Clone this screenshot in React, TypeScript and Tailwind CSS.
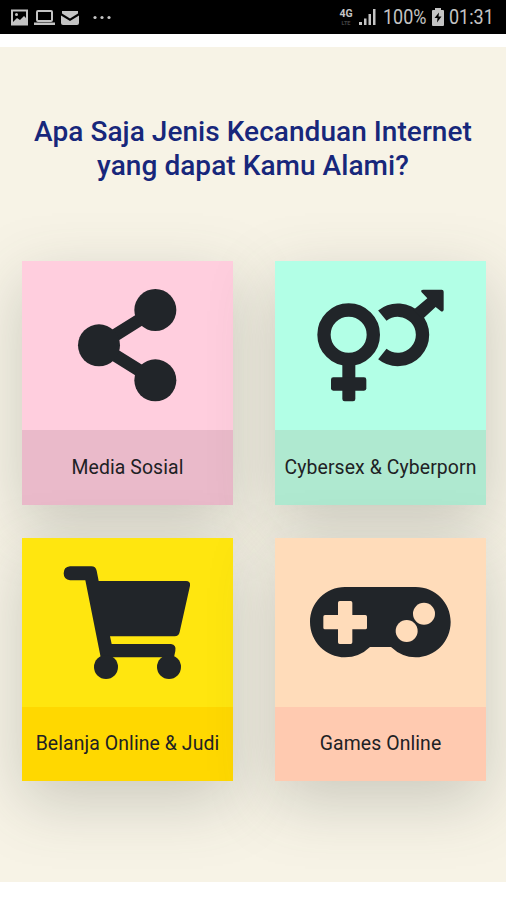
import React from 'react';

interface CategoryCardProps {
  label: string;
  topClass: string;
  labelClass: string;
  viewBox: string;
  children: React.ReactNode;
}

const StatusBar: React.FC = () => (
  <header className="flex h-[34px] items-center justify-between bg-black pl-[11px] pr-[11px] text-[#c4c4c4]">
    <svg width="104" height="20" viewBox="0 0 104 20" fill="none">
      {/* Gallery */}
      <path d="M1 3.5h15v14h-15z" stroke="currentColor" strokeWidth="2" />
      <path d="M2 15l4-4 3 2 4-4 3 3v5H2z" fill="currentColor" />
      <circle cx="5.5" cy="7.5" r="1.5" fill="currentColor" />
      {/* Laptop */}
      <rect x="26" y="4" width="15" height="10" rx="1" stroke="currentColor" strokeWidth="2" />
      <path d="M23 15.5h21v2.5H23z" fill="currentColor" />
      {/* Mail */}
      <path d="M51 4h16v2.5l-8 5-8-5z" fill="currentColor" />
      <path d="M50 8.5l9 5.5 9-5.5V16q0 2-2 2H52q-2 0-2-2z" fill="currentColor" />
      <g fill="currentColor">
        <circle cx="84" cy="10.5" r="1.6" />
        <circle cx="91" cy="10.5" r="1.6" />
        <circle cx="98" cy="10.5" r="1.6" />
      </g>
    </svg>

    <div className="flex items-center">
      <div className="flex w-[16px] flex-col items-center">
        <span className="text-[10.5px] font-bold leading-[13px]">4G</span>
        <span className="text-[5.5px] font-bold leading-[7px] text-[#444444]">LTE</span>
      </div>
      <svg className="ml-[5px]" width="18" height="18" viewBox="0 0 18 18" fill="currentColor">
        <path d="M0 14h3v3H0z" />
        <path d="M5 10.5h2.5V17H5z" />
        <path d="M9.5 6H12v11H9.5z" />
        <path d="M14 1h2.5v16H14z" />
      </svg>
      <span className="ml-[6px] w-[44px] whitespace-nowrap text-[20px] leading-none">
        <span className="inline-block origin-left scale-x-[0.9]">100%</span>
      </span>
      <svg className="ml-[5px]" width="12" height="18" viewBox="0 0 12 18">
        <path d="M3 0h6v2h2q1 0 1 1v14q0 1-1 1H1q-1 0-1-1V3q0-1 1-1h2z" fill="currentColor" />
        <path d="M7 4.5L2.5 10h3L5 14.5 9.5 8.5h-3z" fill="#000000" />
      </svg>
      <span className="ml-[5px] w-[46px] whitespace-nowrap text-[20px] leading-none">
        <span className="inline-block origin-left scale-x-[0.9]">01:31</span>
      </span>
    </div>
  </header>
);

const CategoryCard: React.FC<CategoryCardProps> = ({ label, topClass, labelClass, viewBox, children }) => (
  <button className="block w-[211px] shadow-[0_20px_60px_rgba(70,80,70,0.25)]">
    <div className={topClass}>
      <svg className="block h-[169px] w-full" viewBox={viewBox} fill="#212529">
        {children}
      </svg>
    </div>
    <div className={`flex items-center justify-center whitespace-nowrap text-[19.4px] tracking-[0.1px] text-[#202124] ${labelClass}`}>
      {label}
    </div>
  </button>
);

export default function App() {
  return (
    <div className="h-[900px] w-[506px] overflow-hidden bg-white font-[Roboto,sans-serif]">
      <StatusBar />
      <main className="mt-[13px] h-[835px] overflow-hidden bg-[#f7f3e6] px-[22px] pt-[68px]">
        <h1 className="whitespace-nowrap text-center text-[28px] font-medium leading-[34px] tracking-[0.05px] text-[#17277b]">
          Apa Saja Jenis Kecanduan Internet
          <br />
          yang dapat Kamu Alami?
        </h1>

        <div className="mt-[78px] grid grid-cols-[211px_211px] gap-x-[42px] gap-y-[33px]">
          <CategoryCard label="Media Sosial" topClass="bg-[#ffcede]" labelClass="h-[75px] bg-[#eabaca]" viewBox="-114 -27 633 507">
            <path d="M286 120L117 226L286 331" fill="none" stroke="#212529" strokeWidth="38" />
            <circle cx="286" cy="120" r="63" />
            <circle cx="117" cy="226" r="63" />
            <circle cx="286" cy="331" r="63" />
          </CategoryCard>

          <CategoryCard label="Cybersex & Cyberporn" topClass="bg-[#b2ffe6]" labelClass="h-[75px] bg-[#afe9d0]" viewBox="-75 -27 633 507">
            <circle cx="146" cy="194" r="74" fill="none" stroke="#212529" strokeWidth="40" />
            <rect x="127" y="270" width="39" height="124" rx="7" />
            <rect x="93" y="322" width="106" height="40" rx="7" />
            <path d="M247 137A74 74 0 1 1 247 252" fill="none" stroke="#212529" strokeWidth="40" />
            <path d="M340 120L382 85L365 67Q360 59 370 59H425Q431 59 431 65V120Q428 128 421 122L407 111L368 147Z" />
          </CategoryCard>

          <CategoryCard label="Belanja Online & Judi" topClass="bg-[#ffe60f]" labelClass="h-[74px] bg-[#ffd800]" viewBox="-84 -36 633 507">
            <path d="M60 49H124Q137 49 140 62L146 93H408Q422 93 420 107L389 246Q386 259 374 259H180L185 282H363Q380 285 376 303L372 322H152L106 91H60Q41 89 41 70Q41 51 60 49Z" />
            <circle cx="168" cy="351" r="36" />
            <circle cx="357" cy="351" r="36" />
          </CategoryCard>

          <CategoryCard label="Games Online" topClass="bg-[#ffdcba]" labelClass="h-[74px] bg-[#ffcab0]" viewBox="-75 -96 633 507">
            <path d="M135 51H347C406 51 452 98 452 156S406 262 347 262Q306 262 273 231H210Q178 262 135 262C77 262 30 214 30 156S77 51 135 51Z" />
            <path
              d="M119 93H152Q157 93 157 98V135H196Q201 135 201 140V173Q201 178 196 178H157V217Q157 222 152 222H119Q114 222 114 217V178H75Q70 178 70 173V140Q70 135 75 135H114V98Q114 93 119 93Z"
              fill="#ffdcba"
            />
            <circle cx="372" cy="131" r="33" fill="#ffdcba" />
            <circle cx="320" cy="183" r="33" fill="#ffdcba" />
          </CategoryCard>
        </div>
      </main>
    </div>
  );
}
